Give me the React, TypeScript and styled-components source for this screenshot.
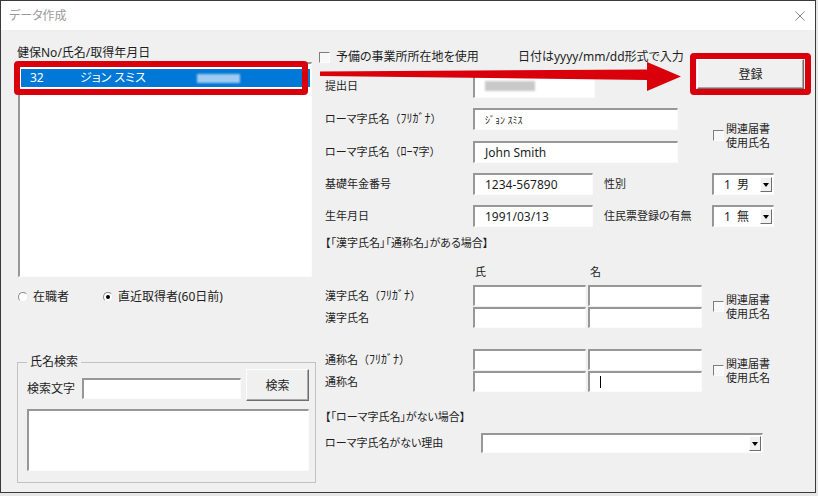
import styled, { createGlobalStyle } from "styled-components";

const RED = "#d9000b";
const SUNKEN = "#979797";

const GlobalStyle = createGlobalStyle`
  * { box-sizing: border-box; }
  html, body { margin: 0; padding: 0; background: #e7e7e7; }
  body {
    font-family: "Noto Sans", "Noto Sans CJK JP", sans-serif;
    font-size: 12px;
    color: #1e1e1e;
    font-feature-settings: "palt";
  }
`;

function CheckBox() {
  return <Box />;
}

function Radio({ checked }: { checked?: boolean }) {
  return <RadioCircle>{checked && <RadioDot />}</RadioCircle>;
}

function ComboBox({ w, value }: { w: number; value?: string }) {
  return (
    <Combo $w={w}>
      <ComboValue>{value}</ComboValue>
      <DropButton />
    </Combo>
  );
}

function RelatedCheck() {
  return (
    <RelCheck>
      <CheckBox />
      <RelText>
        関連届書
        <br />
        使用氏名
      </RelText>
    </RelCheck>
  );
}

function App() {
  return (
    <Screen>
      <GlobalStyle />
      <Window>
        <TitleBar>
          <Title>データ作成</Title>
          <svg width="10" height="10" viewBox="0 0 10 10">
            <path d="M0.5 0.5 L9.5 9.5 M9.5 0.5 L0.5 9.5" stroke="#8a8a8a" strokeWidth="1" />
          </svg>
        </TitleBar>
        <Body>
          <LeftPane>
            <PaneCaption>健保No/氏名/取得年月日</PaneCaption>
            <ListBox>
              <ListItem $selected>
                <Cell $w={50}>32</Cell>
                <Cell $w={117}>ジョン スミス</Cell>
                <BlurPatch $w={43} $h={9} $color="#9fcbf1" />
              </ListItem>
              <Highlight />
            </ListBox>
            <RadioRow>
              <RadioOption $w={85}>
                <Radio />
                <span>在職者</span>
              </RadioOption>
              <RadioOption>
                <Radio checked />
                <span>直近取得者(60日前)</span>
              </RadioOption>
            </RadioRow>
            <GroupBox>
              <Legend>氏名検索</Legend>
              <SearchRow>
                <SearchLabel>検索文字</SearchLabel>
                <SearchInput />
                <PushButton $w={63} $h={32}>検索</PushButton>
              </SearchRow>
              <ResultBox />
            </GroupBox>
          </LeftPane>

          <RightPane>
            <HeaderBlock>
              <HeaderFields>
                <TopRow>
                  <CheckOption>
                    <CheckBox />
                    <span>予備の事業所所在地を使用</span>
                  </CheckOption>
                  <Hint>日付はyyyy/mm/dd形式で入力</Hint>
                </TopRow>
                <FieldRow $h={25} $mt={8}>
                  <Label>提出日</Label>
                  <TextBox $w={122}>
                    <BlurPatch $w={50} $h={10} $color="#c9c9c9" />
                  </TextBox>
                </FieldRow>
              </HeaderFields>
              <ButtonFrame>
                <PushButton $w={107} $h={30}>登録</PushButton>
              </ButtonFrame>
            </HeaderBlock>

            <PairBlock $mt={10}>
              <PairFields>
                <FieldRow $h={22}>
                  <Label>
                    ローマ字氏名<Paren>（<Kana>ﾌﾘｶﾞﾅ</Kana>）</Paren>
                  </Label>
                  <TextBox $w={205}>
                    <SmallKana>ｼﾞｮﾝ ｽﾐｽ</SmallKana>
                  </TextBox>
                </FieldRow>
                <FieldRow $h={22} $mt={11}>
                  <Label>
                    ローマ字氏名<Paren>（<Kana>ﾛｰﾏ</Kana>字）</Paren>
                  </Label>
                  <TextBox $w={205}>John Smith</TextBox>
                </FieldRow>
              </PairFields>
              <RelatedCheck />
            </PairBlock>

            <FieldRow $h={22} $mt={10}>
              <Label>基礎年金番号</Label>
              <TextBox $w={120}>1234-567890</TextBox>
              <SubLabel>性別</SubLabel>
              <ComboBox w={62} value="1 男" />
            </FieldRow>
            <FieldRow $h={22} $mt={10}>
              <Label>生年月日</Label>
              <TextBox $w={120}>1991/03/13</TextBox>
              <SubLabel>住民票登録の有無</SubLabel>
              <ComboBox w={62} value="1 無" />
            </FieldRow>

            <Heading $mt={9}>【「漢字氏名」「通称名」がある場合】</Heading>
            <NameHeader>
              <Label />
              <NameCol>氏</NameCol>
              <NameCol>名</NameCol>
            </NameHeader>

            <PairBlock $mt={6}>
              <PairFields>
                <FieldRow $h={21}>
                  <Label>
                    漢字氏名<Paren>（<Kana>ﾌﾘｶﾞﾅ</Kana>）</Paren>
                  </Label>
                  <TextBox $w={113} />
                  <TextBox $w={114} $ml={2} />
                </FieldRow>
                <FieldRow $h={21} $mt={1}>
                  <Label>漢字氏名</Label>
                  <TextBox $w={113} />
                  <TextBox $w={114} $ml={2} />
                </FieldRow>
              </PairFields>
              <RelatedCheck />
            </PairBlock>

            <PairBlock $mt={21}>
              <PairFields>
                <FieldRow $h={21}>
                  <Label>
                    通称名<Paren>（<Kana>ﾌﾘｶﾞﾅ</Kana>）</Paren>
                  </Label>
                  <TextBox $w={113} />
                  <TextBox $w={114} $ml={2} />
                </FieldRow>
                <FieldRow $h={21} $mt={1}>
                  <Label>通称名</Label>
                  <TextBox $w={113} />
                  <TextBox $w={114} $ml={2}>
                    <Caret />
                  </TextBox>
                </FieldRow>
              </PairFields>
              <RelatedCheck />
            </PairBlock>

            <Heading $mt={18}>【「ローマ字氏名」がない場合】</Heading>
            <FieldRow $h={20} $mt={9}>
              <Label>ローマ字氏名がない理由</Label>
              <ReasonCombo>
                <ComboBox w={282} />
              </ReasonCombo>
            </FieldRow>
          </RightPane>
        </Body>
      </Window>

      <ArrowLayer width="818" height="120" viewBox="0 0 818 120">
        <polygon
          points="320,71.5 647,69.5 647,62 681,76.5 647,91 647,80 320,76"
          fill={RED}
        />
      </ArrowLayer>
    </Screen>
  );
}

export default App;

const Screen = styled.div`
  position: relative;
  width: 818px;
  height: 496px;
  overflow: hidden;
  background: #e7e7e7;
`;

const Window = styled.div`
  width: 816px;
  height: 493px;
  border: 1px solid #3a3a3a;
  background: #f0f0f0;
  display: flex;
  flex-direction: column;
`;

const TitleBar = styled.div`
  flex: none;
  height: 29px;
  background: #fff;
  display: flex;
  align-items: center;
  justify-content: space-between;
  padding: 0 10px 0 8px;
`;

const Title = styled.span`
  color: #9a9a9a;
  font-size: 12px;
  line-height: 14px;
`;

const Body = styled.div`
  flex: 1;
  display: grid;
  grid-template-columns: 299px 1fr;
  column-gap: 3px;
  padding-left: 16px;
  align-items: start;
`;

const LeftPane = styled.div`
  display: flex;
  flex-direction: column;
`;

const PaneCaption = styled.div`
  margin-top: 16px;
  height: 14px;
  line-height: 14px;
  font-size: 12px;
`;

const sunken = `
  background: #fff;
  border-style: solid;
  border-width: 2px 1px 1px 2px;
  border-color: ${SUNKEN} #fbfbfb #fbfbfb ${SUNKEN};
`;

const ListBox = styled.div`
  position: relative;
  margin: 2px 0 0 1px;
  width: 294px;
  height: 215px;
  padding: 5px 1px 0 1px;
  ${sunken}
`;

const ListItem = styled.div<{ $selected?: boolean }>`
  height: 18px;
  display: flex;
  align-items: center;
  padding-left: 9px;
  background: ${(p) => (p.$selected ? "#0078d7" : "transparent")};
  color: ${(p) => (p.$selected ? "#fff" : "#000")};
  font-size: 12px;
`;

const Cell = styled.span<{ $w: number }>`
  width: ${(p) => p.$w}px;
  flex: none;
  line-height: 14px;
  white-space: nowrap;
`;

const BlurPatch = styled.span<{ $w: number; $h: number; $color: string }>`
  display: block;
  width: ${(p) => p.$w}px;
  height: ${(p) => p.$h}px;
  background: ${(p) => p.$color};
  filter: blur(1.2px);
`;

const Highlight = styled.div`
  position: absolute;
  left: -6px;
  top: -3px;
  width: 294px;
  height: 34px;
  border: 6px solid ${RED};
  border-radius: 4px;
  pointer-events: none;
`;

const RadioRow = styled.div`
  margin-top: 13px;
  height: 14px;
  padding-left: 1px;
  display: flex;
  align-items: center;
  font-size: 12px;
  line-height: 14px;
`;

const RadioOption = styled.label<{ $w?: number }>`
  display: flex;
  align-items: center;
  gap: 5px;
  ${(p) => (p.$w ? `width: ${p.$w}px;` : "")}
  white-space: nowrap;
`;

const RadioCircle = styled.span`
  width: 10px;
  height: 10px;
  flex: none;
  border-radius: 50%;
  background: #fff;
  border: 1px solid;
  border-color: #8a8a8a #ececec #ececec #8a8a8a;
  display: flex;
  align-items: center;
  justify-content: center;
`;

const RadioDot = styled.span`
  width: 4px;
  height: 4px;
  border-radius: 50%;
  background: #000;
`;

const GroupBox = styled.fieldset`
  margin: 51px 0 0 0;
  padding: 0 6px 0 9px;
  width: 299px;
  height: 128px;
  min-width: 0;
  border: 1px solid #c2c2c2;
`;

const Legend = styled.legend`
  padding: 0 3px;
  font-size: 12px;
  line-height: 14px;
`;

const SearchRow = styled.div`
  height: 32px;
  display: flex;
  align-items: flex-end;
`;

const SearchLabel = styled.span`
  width: 55px;
  flex: none;
  margin-bottom: 5px;
  line-height: 14px;
  font-size: 12px;
`;

const SearchInput = styled.div`
  width: 159px;
  height: 21px;
  margin-bottom: 2px;
  ${sunken}
`;

const PushButton = styled.button<{ $w: number; $h: number }>`
  width: ${(p) => p.$w}px;
  height: ${(p) => p.$h}px;
  flex: none;
  margin-left: auto;
  padding: 0;
  background: #f0f0f0;
  border: 1px solid;
  border-color: #fdfdfd #6e6e6e #6e6e6e #fdfdfd;
  box-shadow: inset -1px -1px 0 #a9a9a9;
  font-family: inherit;
  font-size: 12px;
  color: #1e1e1e;
`;

const ResultBox = styled.div`
  margin-top: 8px;
  width: 282px;
  height: 62px;
  ${sunken}
`;

const RightPane = styled.div`
  display: flex;
  flex-direction: column;
  padding-top: 19px;
  font-size: 11px;
`;

const HeaderBlock = styled.div`
  display: flex;
  align-items: flex-start;
`;

const HeaderFields = styled.div`
  width: 371px;
  flex: none;
  display: flex;
  flex-direction: column;
`;

const TopRow = styled.div`
  height: 16px;
  display: flex;
  align-items: center;
  font-size: 12px;
  line-height: 14px;
  white-space: nowrap;
`;

const CheckOption = styled.label`
  width: 199px;
  flex: none;
  display: flex;
  align-items: center;
  gap: 6px;
`;

const Hint = styled.span``;

const Box = styled.span`
  width: 11px;
  height: 11px;
  flex: none;
  background: #f8f8f8;
  border: 1px solid;
  border-color: #7d7d7d #fdfdfd #fdfdfd #7d7d7d;
`;

const ButtonFrame = styled.div`
  margin-top: 4px;
  width: 121px;
  height: 42px;
  border: 6px solid ${RED};
  border-radius: 4px;
  padding: 0 1px;
  display: flex;
`;

const FieldRow = styled.div<{ $h: number; $mt?: number }>`
  height: ${(p) => p.$h}px;
  margin-top: ${(p) => p.$mt ?? 0}px;
  padding-left: 6px;
  display: flex;
  align-items: center;
  flex: none;
`;

const PairBlock = styled.div<{ $mt: number }>`
  margin-top: ${(p) => p.$mt}px;
  display: flex;
  align-items: center;
`;

const PairFields = styled.div`
  width: 394px;
  flex: none;
  display: flex;
  flex-direction: column;
`;

const Label = styled.span`
  width: 148px;
  flex: none;
  line-height: 14px;
  white-space: nowrap;
`;

const Paren = styled.span`
  font-feature-settings: normal;
`;

const Kana = styled.span`
  font-size: 12px;
`;

const SubLabel = styled.span`
  width: 108px;
  margin-left: 11px;
  flex: none;
  line-height: 14px;
  white-space: nowrap;
`;

const TextBox = styled.div<{ $w: number; $ml?: number }>`
  width: ${(p) => p.$w}px;
  height: 100%;
  margin-left: ${(p) => p.$ml ?? 0}px;
  flex: none;
  display: flex;
  align-items: center;
  padding-left: 10px;
  font-size: 12px;
  line-height: 14px;
  white-space: nowrap;
  ${sunken}
`;

const SmallKana = styled.span`
  font-size: 10px;
  font-feature-settings: normal;
`;

const Caret = styled.span`
  width: 1px;
  height: 12px;
  background: #000;
`;

const Combo = styled.div<{ $w: number }>`
  width: ${(p) => p.$w}px;
  height: 100%;
  flex: none;
  display: flex;
  align-items: center;
  ${sunken}
`;

const ComboValue = styled.span`
  flex: 1;
  padding-left: 10px;
  font-size: 12px;
  line-height: 14px;
  word-spacing: 3px;
  white-space: nowrap;
`;

const DropButton = styled.span`
  width: 12px;
  height: 15px;
  margin-right: 1px;
  flex: none;
  background: #f0f0f0;
  border: 1px solid;
  border-color: #fdfdfd #6e6e6e #6e6e6e #fdfdfd;
  display: flex;
  align-items: center;
  justify-content: center;
  &::after {
    content: "";
    border-left: 3.5px solid transparent;
    border-right: 3.5px solid transparent;
    border-top: 4px solid #000;
  }
`;

const RelCheck = styled.div`
  display: flex;
  align-items: center;
  gap: 2px;
`;

const RelText = styled.span`
  line-height: 14px;
  font-size: 11px;
`;

const Heading = styled.div<{ $mt: number }>`
  margin-top: ${(p) => p.$mt}px;
  height: 14px;
  line-height: 14px;
  padding-left: 6px;
  white-space: nowrap;
`;

const NameHeader = styled.div`
  margin-top: 15px;
  height: 14px;
  line-height: 14px;
  padding-left: 6px;
  display: flex;
`;

const NameCol = styled.span`
  width: 115px;
  padding-left: 2px;
  flex: none;
`;

const ReasonCombo = styled.div`
  margin-left: 8px;
  height: 100%;
  display: flex;
`;

const ArrowLayer = styled.svg`
  position: absolute;
  left: 0;
  top: 0;
  pointer-events: none;
`;
